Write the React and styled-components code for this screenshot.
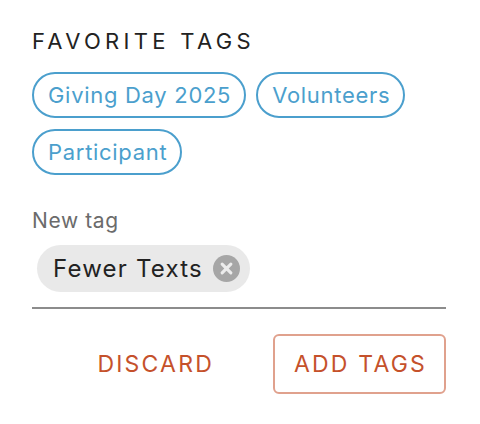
import React from 'react';
import styled, { createGlobalStyle } from 'styled-components';

const GlobalStyle = createGlobalStyle`
  html, body {
    margin: 0;
    padding: 0;
    background: #ffffff;
  }
  body {
    font-family: Inter, Lato, sans-serif;
  }
`;

const Panel = styled.div`
  width: 480px;
  height: 424px;
  box-sizing: border-box;
  padding: 28px 34px 0 32px;
  background: #ffffff;
`;

const Heading = styled.h2`
  margin: 0;
  font-size: 22px;
  font-weight: 400;
  letter-spacing: 4.3px;
  color: #222222;
  line-height: 26px;
`;

const TagList = styled.div`
  display: flex;
  flex-wrap: wrap;
  gap: 11px 10px;
  margin-top: 18px;
`;

const Tag = styled.button`
  height: 46px;
  box-sizing: border-box;
  padding: 0 13px 0 14px;
  border: 2px solid #4b9fcd;
  border-radius: 23px;
  background: #ffffff;
  color: #4b9fcd;
  font-family: inherit;
  font-size: 22px;
  font-weight: 400;
  letter-spacing: 0.7px;
  cursor: pointer;
`;

const FieldLabel = styled.div`
  margin-top: 33px;
  font-size: 21px;
  letter-spacing: 0.6px;
  color: #6b6b6b;
  line-height: 26px;
`;

const Field = styled.div`
  display: flex;
  align-items: center;
  padding: 11px 0 15px 5px;
  border-bottom: 2px solid #8c8c8c;
`;

const Chip = styled.span`
  display: inline-flex;
  align-items: center;
  gap: 10px;
  height: 47px;
  padding: 0 10px 0 16px;
  border-radius: 24px;
  background: #e9e9e9;
  color: #222222;
  font-size: 24px;
  letter-spacing: 1.2px;
`;

const RemoveIcon = () => (
  <svg width="27" height="27" viewBox="0 0 26 26">
    <circle cx="13" cy="13" r="13" fill="#a6a6a6" />
    <path d="M8.8 8.8 L17.2 17.2 M17.2 8.8 L8.8 17.2" stroke="#ececec" strokeWidth="3" strokeLinecap="round" />
  </svg>
);

const Actions = styled.div`
  display: flex;
  justify-content: flex-end;
  align-items: center;
  gap: 37px;
  margin-top: 25px;
`;

const ActionButton = styled.button`
  height: 60px;
  box-sizing: border-box;
  padding: 0 ${(p) => (p.outlined ? '17px 0 19px' : '20px')};
  border: 2px solid ${(p) => (p.outlined ? '#e0a18d' : 'transparent')};
  border-radius: 6px;
  background: #ffffff;
  color: #c5512b;
  font-family: inherit;
  font-size: 23px;
  letter-spacing: 2.2px;
  text-transform: uppercase;
  cursor: pointer;
`;

const favorites = ['Giving Day 2025', 'Volunteers', 'Participant'];

export default function App() {
  return (
    <>
      <GlobalStyle />
      <Panel>
        <Heading>FAVORITE TAGS</Heading>
        <TagList>
          {favorites.map((tag) => (
            <Tag key={tag}>{tag}</Tag>
          ))}
        </TagList>
        <FieldLabel>New tag</FieldLabel>
        <Field>
          <Chip>
            Fewer Texts
            <RemoveIcon />
          </Chip>
        </Field>
        <Actions>
          <ActionButton>Discard</ActionButton>
          <ActionButton outlined>Add tags</ActionButton>
        </Actions>
      </Panel>
    </>
  );
}
